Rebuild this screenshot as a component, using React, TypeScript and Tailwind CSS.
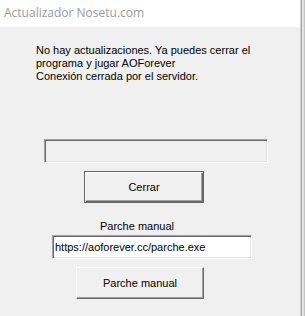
const sans = "font-['Liberation_Sans',Arial,sans-serif]";

export default function App() {
  return (
    <div className="flex h-[316px] w-[305px] overflow-hidden bg-[#f0f0f0]">
      {/* window */}
      <div className="flex w-[300px] flex-col">
        {/* title bar */}
        <div className="flex h-[27px] items-center bg-white pl-[4px] pb-[2px] font-['Open_Sans','Noto_Sans',sans-serif] text-[12px] text-[#9a9a9a]">
          Actualizador Nosetu.com
        </div>

        {/* body */}
        <div className={`flex flex-1 flex-col ${sans} text-[11px] leading-[13px] text-black`}>
          <p className="ml-[36px] mt-[17px] w-[215px]">
            No hay actualizaciones. Ya puedes cerrar el programa y jugar AOForever
            <br />
            Conexión cerrada por el servidor.
          </p>

          {/* status box */}
          <div className="ml-[44px] mt-[56px] h-[24px] w-[224px] border border-t-[#a0a0a0] border-l-[#a0a0a0] border-r-white border-b-white shadow-[inset_1px_1px_0_#696969,inset_-1px_-1px_0_#e3e3e3]" />

          <button className="ml-[84px] mt-[8px] h-[32px] w-[120px] border border-[#646464] bg-[#f0f0f0] shadow-[inset_1px_1px_0_#fff,inset_-1px_-1px_0_#696969,inset_-2px_-2px_0_#a0a0a0] pt-[1px] text-[11px]">
            Cerrar
          </button>

          <span className="ml-[100px] mt-[17px]">Parche manual</span>

          <div className="ml-[52px] mt-[2px] flex h-[24px] w-[200px] items-center border border-t-[#a0a0a0] border-l-[#a0a0a0] border-r-white border-b-white bg-white pl-[2px] shadow-[inset_1px_1px_0_#696969,inset_-1px_-1px_0_#e3e3e3]">
            https://aoforever.cc/parche.exe
          </div>

          <button className="ml-[76px] mt-[8px] h-[32px] w-[128px] border border-t-white border-l-white border-r-[#696969] border-b-[#696969] bg-[#f0f0f0] shadow-[inset_-1px_-1px_0_#a0a0a0] pt-[1px] text-[11px]">
            Parche manual
          </button>
        </div>
      </div>

      {/* edge of window behind */}
      <div className="flex w-[5px]">
        <div className="w-[1px] bg-[#d0d0d0]" />
        <div className="w-[1px] bg-[#a8a8a8]" />
        <div className="w-[2px] bg-[#e2e2e2]" />
        <div className="w-[1px] bg-[#c4c4c4]" />
      </div>
    </div>
  );
}
